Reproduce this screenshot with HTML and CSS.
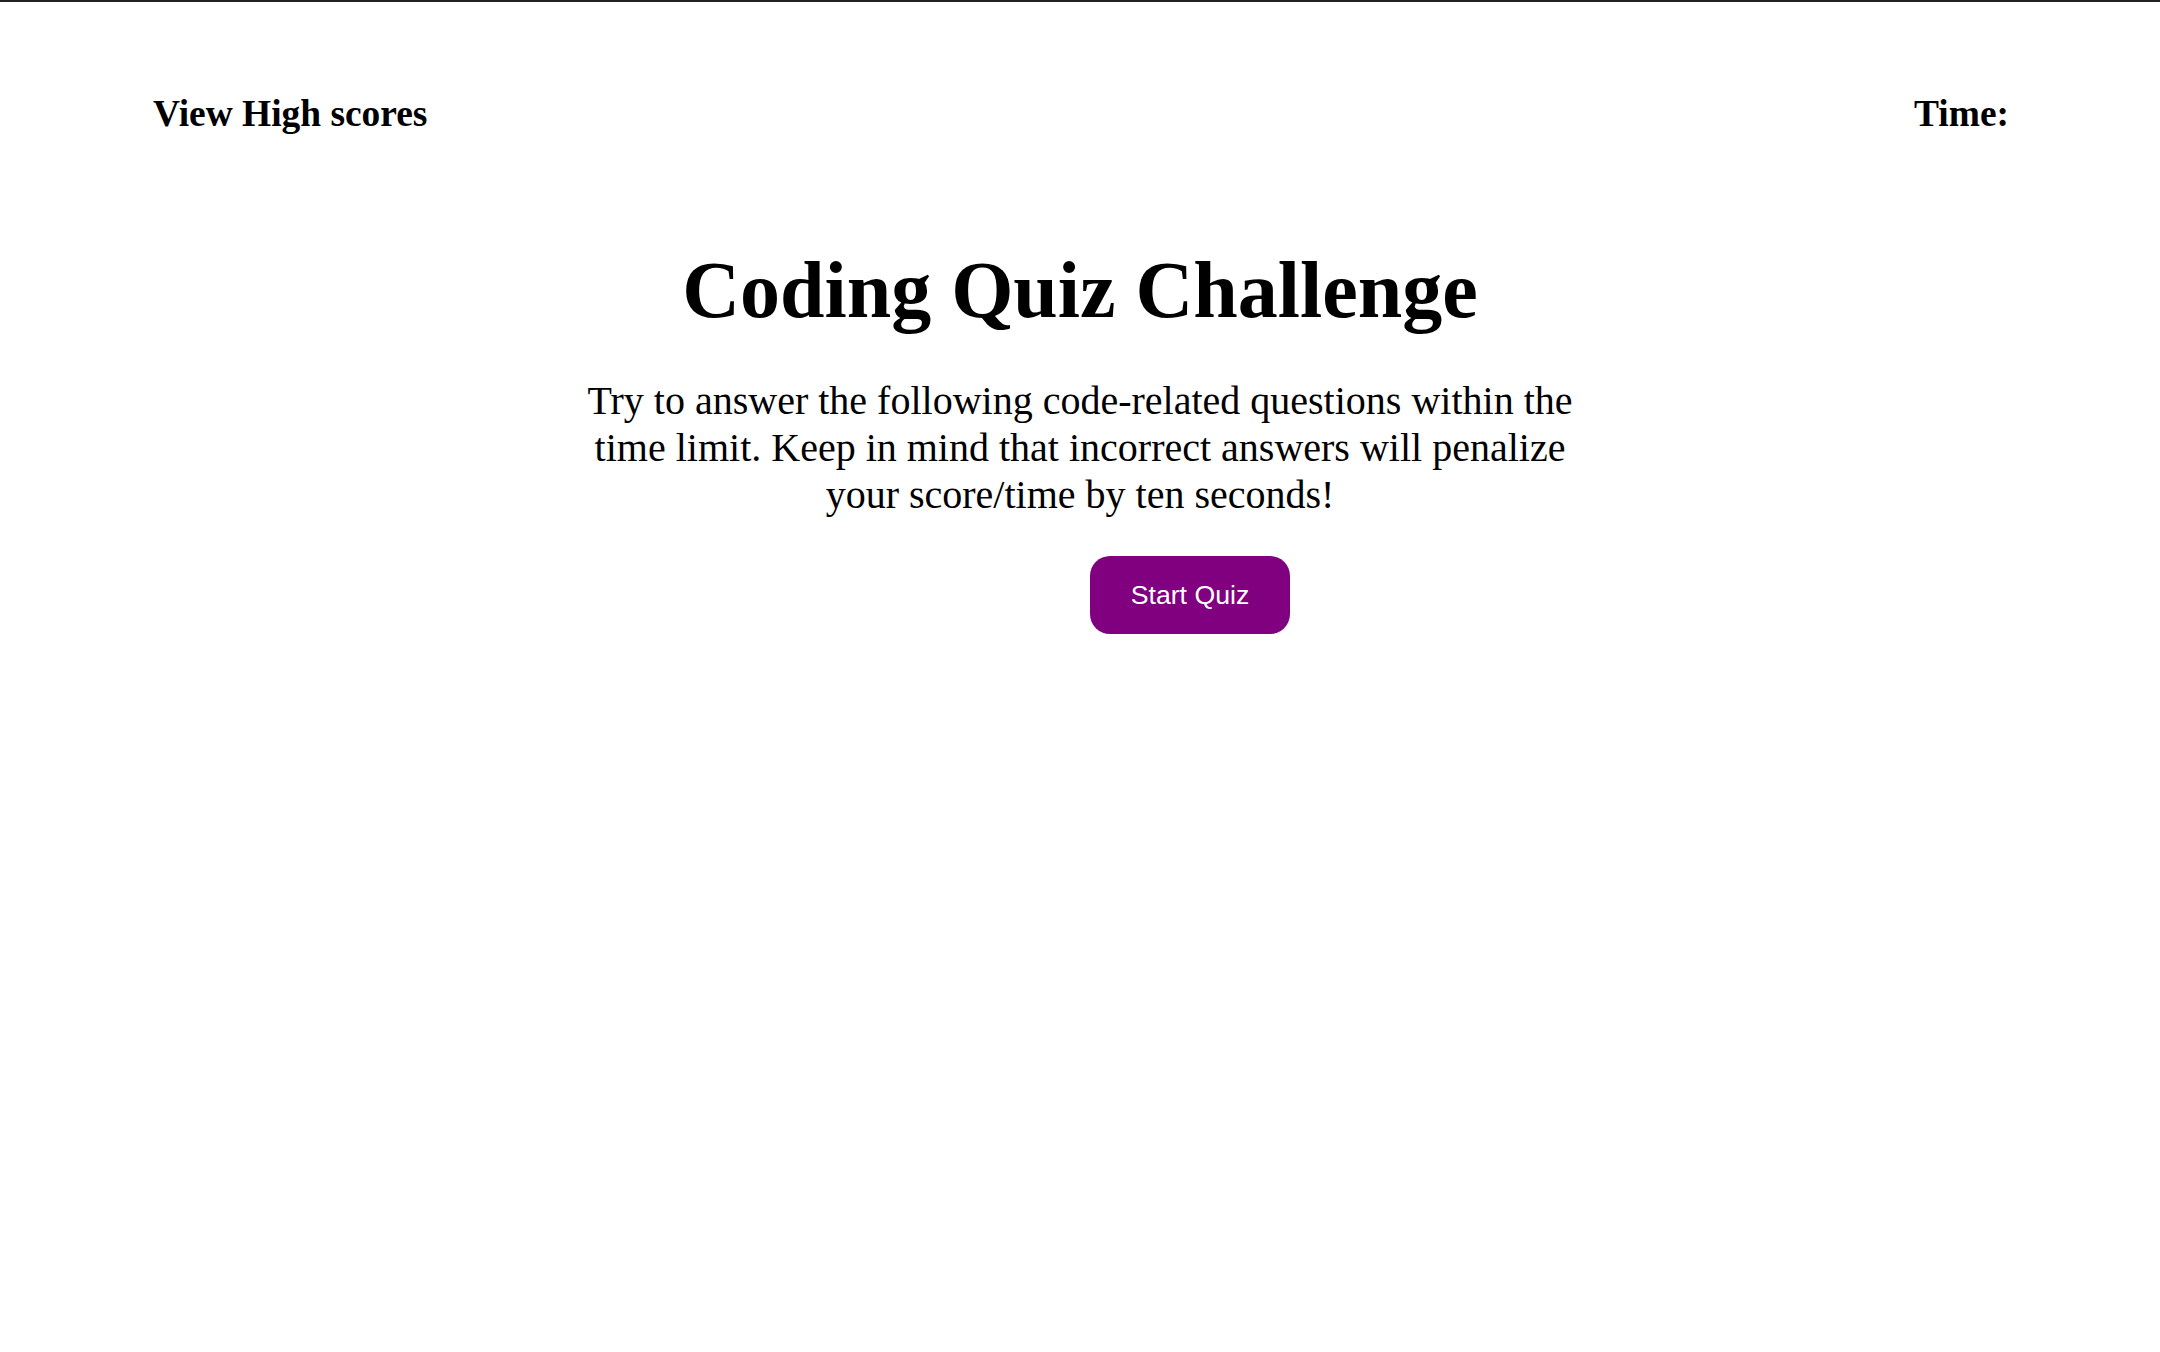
FILE: index.html
```html
<!DOCTYPE html>
<html lang="en">
<head>
<meta charset="utf-8">
<title>Coding Quiz Challenge</title>
<link rel="stylesheet" href="styles.css">
</head>
<body>
<div class="topline"></div>
<header class="header">
  <h3 class="header-link">View High scores</h3>
  <h3 class="header-time">Time:</h3>
</header>
<main class="intro">
  <h1 class="title">Coding Quiz Challenge</h1>
  <p class="lead">Try to answer the following code-related questions within the time limit. Keep in mind that incorrect answers will penalize your score/time by ten seconds!</p>
  <button class="start-btn" type="button">Start Quiz</button>
</main>
</body>
</html>
```
FILE: styles.css
```css
html, body {
  margin: 0;
  padding: 0;
  background: #fff;
}
body {
  font-family: "Liberation Serif", "Times New Roman", serif;
  color: #000;
}
.topline {
  height: 2px;
  background: #222;
}
.header {
  display: flex;
  justify-content: space-between;
  align-items: flex-start;
  padding: 90px 151px 0 153px;
}
.header-link,
.header-time {
  margin: 0;
  font-size: 37.44px;
  font-weight: bold;
  line-height: normal;
}
.intro {
  display: flex;
  flex-direction: column;
  align-items: center;
}
.title {
  margin: 110px 0 0;
  font-size: 80px;
  font-weight: bold;
  line-height: normal;
}
.lead {
  width: 1000px;
  margin: 41px 0 0;
  font-size: 40px;
  line-height: normal;
  text-align: center;
}
.start-btn {
  margin: 38px 0 0 220px;
  width: 200px;
  height: 78px;
  padding: 0;
  border: none;
  border-radius: 20px;
  background: #800080;
  color: #fff;
  font-family: "Liberation Sans", Arial, sans-serif;
  font-size: 26.67px;
}
```
